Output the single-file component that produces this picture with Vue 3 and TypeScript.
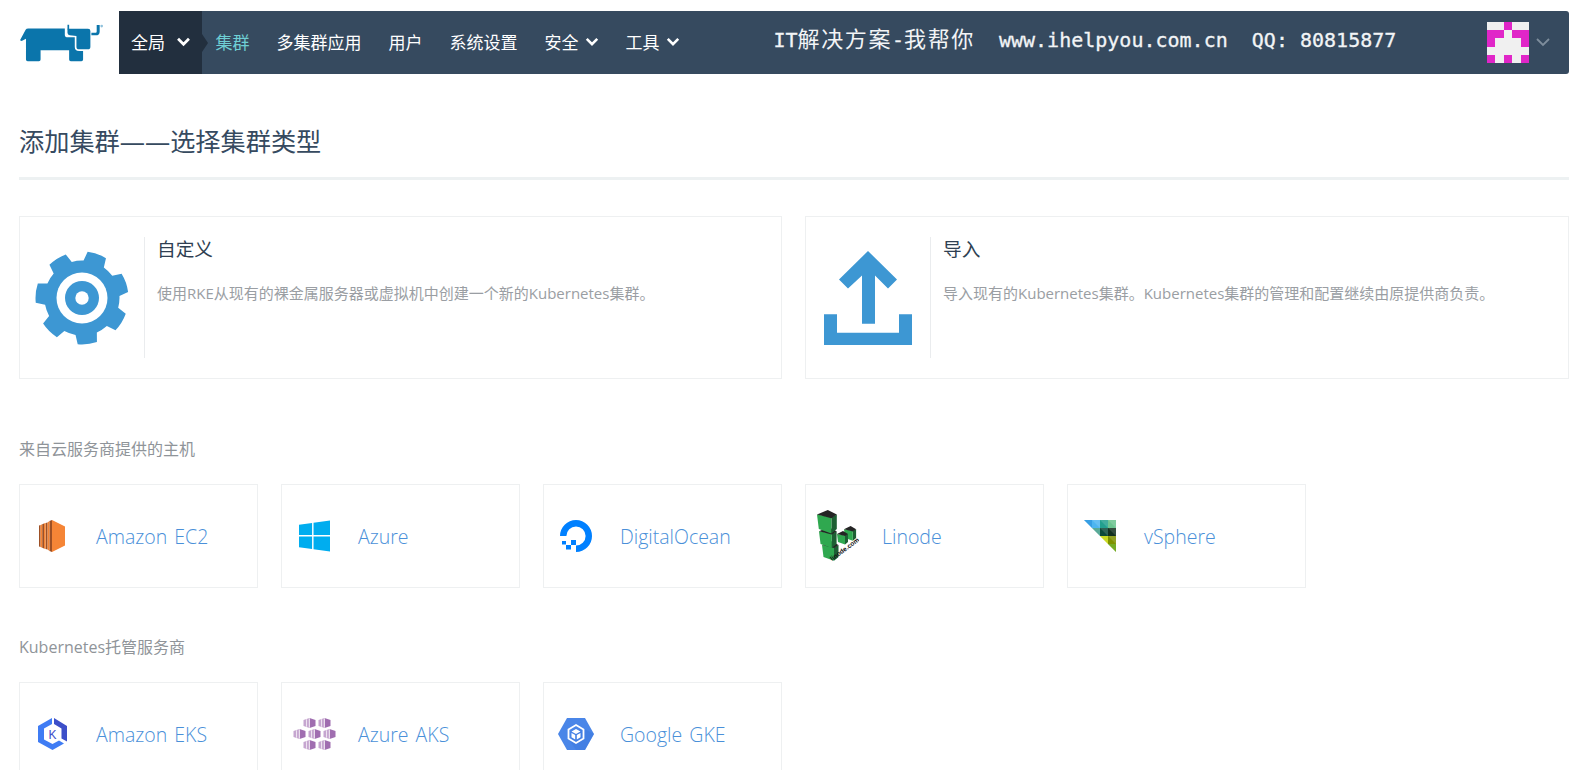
<script setup lang="ts">
const navItems = [
  { label: '集群', active: true },
  { label: '多集群应用' },
  { label: '用户' },
  { label: '系统设置' },
  { label: '安全', menu: true },
  { label: '工具', menu: true },
]

// 模板里连续空格会被压缩,所以放在这里
const bannerParts = [
  { text: 'IT' },
  { text: '解决方案', cjk: true },
  { text: '-' },
  { text: '我帮你', cjk: true },
  { text: '  www.ihelpyou.com.cn  QQ: 80815877' },
]

// 头像图案 1 = 品红
const avatar = [
  0, 0, 1, 0, 0,
  1, 1, 0, 1, 1,
  1, 0, 0, 0, 1,
  0, 0, 0, 0, 0,
  1, 0, 1, 0, 1,
]

const cloudHosts = [
  { id: 'ec2', name: 'Amazon EC2' },
  { id: 'azure', name: 'Azure' },
  { id: 'do', name: 'DigitalOcean' },
  { id: 'linode', name: 'Linode' },
  { id: 'vsphere', name: 'vSphere' },
]

const hosted = [
  { id: 'eks', name: 'Amazon EKS' },
  { id: 'aks', name: 'Azure AKS' },
  { id: 'gke', name: 'Google GKE' },
]

// 齿轮外形,7 个齿
function gearPath(): string {
  const teeth = 7
  const tipR = 46.5
  const rootR = 37.5
  const step = (Math.PI * 2) / teeth
  const pt = (r: number, a: number) =>
    `${(Math.sin(a) * r + 48).toFixed(2)} ${(48 - Math.cos(a) * r).toFixed(2)}`
  let d = ''
  for (let i = 0; i < teeth; i++) {
    const c = ((19 * Math.PI) / 180) + i * step
    const baseHalf = 0.29
    const tipHalf = 0.21
    d += `${i === 0 ? 'M' : 'L'}${pt(rootR, c - baseHalf)} L${pt(tipR, c - tipHalf)} `
    d += `A${tipR} ${tipR} 0 0 1 ${pt(tipR, c + tipHalf)} L${pt(rootR, c + baseHalf)} `
    d += `A${rootR} ${rootR} 0 0 1 ${pt(rootR, c + step - baseHalf)} `
  }
  return d + 'Z'
}

const gear = gearPath()

const linodeCubes = [
  { x: 27, y: 17, s: 11 },
  { x: 20, y: 22, s: 10 },
  { x: 5, y: 32, s: 15 },
  { x: 2, y: 18, s: 16 },
  { x: 0, y: 1, s: 18 },
]

const vsphereTiles = [
  { x: 0, y: 0, c: '#1790e0' }, { x: 8, y: 0, c: '#4db5f0' }, { x: 16, y: 0, c: '#22a08e' }, { x: 24, y: 0, c: '#6cc490' },
  { x: 8, y: 8, c: '#3e9c88' }, { x: 16, y: 8, c: '#0d4a3a' }, { x: 24, y: 8, c: '#12301f' },
  { x: 16, y: 16, c: '#c2d400' }, { x: 24, y: 16, c: '#7f9200' },
  { x: 24, y: 24, c: '#5f9e00' },
]

const aksHexes = [
  [10, 0], [25, 0],
  [0, 11], [15, 11], [30, 11],
  [10, 22], [25, 22],
]
</script>

<template>
  <div class="page">
    <header class="top">
      <div class="logo-box">
        <svg class="logo" viewBox="60 56 250 114" width="83" height="38">
          <path fill="#0b75ab" d="M60 105 L77 73 Q79 69 85 69 L195 69 L195 88 Q195 96 204 96 L225 96 L225 125 Q225 137 238 137 L250 137 L250 163 Q250 168 245 168 L213 168 Q208 168 208 163 L208 135 L122 135 L122 163 Q122 168 117 168 L83 168 Q78 168 78 163 L78 100 L65 107 Z" />
          <path fill="#0b75ab" d="M203 70 L265 70 Q272 70 272 77 L272 124 Q272 132 264 132 L238 132 Q230 132 230 124 L230 92 L210 90 Q203 89 203 82 Z" />
          <path fill="#0b75ab" d="M203 58 L208 58 L208 72 L203 72 Z M275 82 L288 82 Q291 82 291 78 L291 59 L300 59 L300 78 Q300 90 288 90 L275 90 Z" />
          <circle cx="306" cy="62" r="4" fill="#8fc1dc" />
        </svg>
      </div>
      <div class="bar">
        <div class="scope">
          <span>全局</span>
          <svg class="chev scope-chev" viewBox="0 0 16 11"><path d="M2 2 L8 8 L14 2" /></svg>
          <i class="scope-tip"></i>
        </div>
        <nav class="nav">
          <a v-for="item in navItems" :key="item.label" class="nav-link" :class="{ active: item.active }">
            {{ item.label }}
            <svg v-if="item.menu" class="chev" viewBox="0 0 16 11"><path d="M2 2 L8 8 L14 2" /></svg>
          </a>
        </nav>
        <div class="banner"><span v-for="part in bannerParts" :key="part.text" :class="{ cjk: part.cjk }">{{ part.text }}</span></div>
        <div class="user">
          <div class="avatar">
            <i v-for="(c, i) in avatar" :key="i" :class="{ on: c }"></i>
          </div>
          <svg class="user-chev" viewBox="0 0 14 9"><path d="M1 1 L7 7 L13 1" /></svg>
        </div>
      </div>
    </header>

    <h1 class="title">添加集群——选择集群类型</h1>

    <section class="big-row">
      <div class="big-card">
        <div class="big-icon">
          <svg viewBox="0 0 96 96" width="96" height="96">
            <path :d="gear" fill="#3d97d3" />
            <circle cx="48" cy="48" r="25.5" fill="#fff" />
            <circle cx="48" cy="48" r="17" fill="#3d97d3" />
            <circle cx="48" cy="48" r="6.7" fill="#fff" />
          </svg>
        </div>
        <div class="big-body">
          <h3>自定义</h3>
          <p>使用RKE从现有的裸金属服务器或虚拟机中创建一个新的Kubernetes集群。</p>
        </div>
      </div>
      <div class="big-card">
        <div class="big-icon">
          <svg class="upload" viewBox="0 0 88 94" width="88" height="94">
            <path fill="#3d97d3" d="M44 0 L73 28.5 L64 37.5 L51 24.5 L51 72.7 L38 72.7 L38 24.5 L24 37.5 L15 28.5 Z" />
            <path fill="#3d97d3" d="M0 63.3 L13 63.3 L13 81.7 L75 81.7 L75 63.3 L88 63.3 L88 94 L0 94 Z" />
          </svg>
        </div>
        <div class="big-body">
          <h3>导入</h3>
          <p>导入现有的Kubernetes集群。Kubernetes集群的管理和配置继续由原提供商负责。</p>
        </div>
      </div>
    </section>

    <h4 class="group">来自云服务商提供的主机</h4>
    <section class="grid">
      <div v-for="p in cloudHosts" :key="p.id" class="tile">
        <div class="tile-icon">
          <svg v-if="p.id === 'ec2'" viewBox="0 0 26 32" width="26" height="32">
            <path fill="#f58536" d="M13 0 L26 6.5 L26 25.5 L13 32 Z" />
            <path fill="#9d5025" d="M0 5.5 L1.6 5 L1.6 27 L0 26.5 Z M3.2 4.2 L5 3.6 L5 28.4 L3.2 27.8 Z M6.6 3 L8.6 2.4 L8.6 29.6 L6.6 29 Z M10.4 1 L13 0 L13 32 L10.4 31 Z" />
            <path fill="#f58536" d="M1.6 5 L3.2 4.2 L3.2 27.8 L1.6 27 Z M5 3.6 L6.6 3 L6.6 29 L5 28.4 Z M8.6 2.4 L10.4 1 L10.4 31 L8.6 29.6 Z" />
          </svg>
          <svg v-else-if="p.id === 'azure'" viewBox="0 0 32 32" width="31" height="32">
            <path fill="#00adef" d="M0 4.5 L13.5 2.6 L13.5 15 L0 15 Z M15 2.4 L32 0 L32 15 L15 15 Z M0 16.5 L13.5 16.5 L13.5 29.4 L0 27.5 Z M15 16.5 L32 16.5 L32 32 L15 29.6 Z" />
          </svg>
          <svg v-else-if="p.id === 'do'" viewBox="0 0 32 32" width="32" height="32">
            <path fill="none" stroke="#0080ff" stroke-width="6.4" d="M3.2 16 A12.8 12.8 0 1 1 16 28.8" />
            <path fill="#0080ff" d="M11 20 H16 V25 H11 Z M6 25 H11 V29.5 H6 Z M2 21 H6 V24.5 H2 Z" />
          </svg>
          <svg v-else-if="p.id === 'linode'" viewBox="0 0 42 52" width="42" height="52">
            <g v-for="(c, i) in linodeCubes" :key="i">
              <path fill="#1d5f33" :d="`M${c.x + c.s * 0.8} ${c.y + c.s * 0.35} L${c.x + c.s * 1.1} ${c.y + c.s * 0.2} L${c.x + c.s * 1.1} ${c.y + c.s} L${c.x + c.s * 0.8} ${c.y + c.s * 1.25} Z`" />
              <path fill="#2fa84f" :d="`M${c.x} ${c.y + c.s * 0.2} L${c.x + c.s * 0.8} ${c.y + c.s * 0.35} L${c.x + c.s * 0.8} ${c.y + c.s * 1.25} L${c.x + c.s * 0.1} ${c.y + c.s} Z`" />
              <path fill="#242424" :d="`M${c.x} ${c.y + c.s * 0.2} L${c.x + c.s * 0.6} ${c.y - 1} L${c.x + c.s * 1.1} ${c.y + c.s * 0.2} L${c.x + c.s * 0.8} ${c.y + c.s * 0.4} Z`" />
            </g>
            <text class="linode-text" x="0" y="0" transform="translate(15 51) rotate(-36)">linode.com</text>
          </svg>
          <svg v-else viewBox="0 0 32 32" width="32" height="32">
            <defs><clipPath id="vs-clip"><path d="M0 0 L32 0 L32 32 Z" /></clipPath></defs>
            <g clip-path="url(#vs-clip)">
              <g v-for="(t, i) in vsphereTiles" :key="i">
                <rect :x="t.x" :y="t.y" width="8" height="8" :fill="t.c" />
                <path :d="`M${t.x} ${t.y} L${t.x + 8} ${t.y} L${t.x + 8} ${t.y + 8} Z`" fill="#fff" opacity="0.14" />
              </g>
            </g>
          </svg>
        </div>
        <span class="tile-name">{{ p.name }}</span>
      </div>
    </section>

    <h4 class="group second">Kubernetes托管服务商</h4>
    <section class="grid">
      <div v-for="p in hosted" :key="p.id" class="tile">
        <div class="tile-icon">
          <svg v-if="p.id === 'eks'" viewBox="0 0 29 32" width="29" height="32">
            <path fill="#3f7cf4" d="M14 0 L14 6 L6 10.5 L6 21.5 L14.5 26 L21 22.5 L26 25.5 L14.5 32 L0 24 L0 8 Z" />
            <path fill="#3d4fc9" d="M16 0 L29 8 L29 23.5 L23.5 20.5 L23.5 10.5 L16 6 Z" />
            <text class="eks-k" x="14.5" y="20.5">K</text>
          </svg>
          <svg v-else-if="p.id === 'aks'" viewBox="0 0 43 32" width="43" height="32">
            <g v-for="(h, i) in aksHexes" :key="i" :transform="`translate(${h[0]} ${h[1]})`">
              <path fill="#a06eb0" d="M6.5 0 L12.5 2 L12.5 8 L6.5 10 Z" />
              <path fill="#c6a6d0" d="M6.5 0 L0.5 2 L0.5 8 L6.5 10 Z" />
              <path fill="#fff" d="M3.2 1.2 H3.9 V8.8 H3.2 Z M5.9 0.4 H6.6 V9.6 H5.9 Z" />
            </g>
          </svg>
          <svg v-else viewBox="0 0 36 32" width="36" height="32">
            <path fill="#4a86e8" d="M9 0 L27 0 L36 16 L27 32 L9 32 L0 16 Z" />
            <path fill="#3b78de" d="M23 9 L36 16 L27 32 L18 32 L12 23 Z" opacity="0.45" />
            <path fill="none" stroke="#fff" stroke-width="1.8" d="M18 7 L25.5 11.5 L25.5 20.5 L18 25 L10.5 20.5 L10.5 11.5 Z" />
            <path fill="#fff" d="M18 11 L22.5 13.5 L18 16 L13.5 13.5 Z M13.5 15 L17.2 17 L17.2 21.5 L13.5 19.3 Z M22.5 15 L18.8 17 L18.8 21.5 L22.5 19.3 Z" />
          </svg>
        </div>
        <span class="tile-name">{{ p.name }}</span>
      </div>
    </section>
  </div>
</template>

<style>
html, body {
  overflow: hidden;
  background: #fff;
}
</style>

<style scoped>
.page {
  padding: 11px 5px 0 19px;
  font-family: "Open Sans", "Noto Sans CJK SC", sans-serif;
  color: #2f3f52;
}

.top {
  display: flex;
  height: 63px;
}

.logo-box {
  width: 100px;
  margin-top: 13px;
}

.logo {
  display: block;
  margin-left: 1px;
}

.bar {
  flex: 1;
  display: flex;
  align-items: center;
  background: #364a5f;
  border-radius: 0 3px 3px 0;
  color: #fff;
}

.scope {
  position: relative;
  display: flex;
  align-items: center;
  flex: none;
  width: 83px;
  height: 100%;
  padding: 0 0 2px 12px;
  box-sizing: border-box;
  background: #222f3e;
  font-size: 17px;
}

.scope-tip {
  position: absolute;
  left: 100%;
  top: 23px;
  border-left: 6px solid #222f3e;
  border-top: 9px solid transparent;
  border-bottom: 9px solid transparent;
}

.chev {
  width: 14px;
  height: 10px;
  margin-left: 6px;
  fill: none;
  stroke: #fff;
  stroke-width: 3;
}

.chev.scope-chev {
  flex: none;
  width: 15px;
  margin-left: 11px;
}

.nav {
  display: flex;
  align-items: center;
  flex: none;
  margin-left: 13.5px;
  padding-bottom: 2px;
  gap: 27px;
  font-size: 17px;
}

.nav-link {
  display: flex;
  align-items: center;
  white-space: nowrap;
}

.nav-link.active {
  color: #6fcfd4;
}

.banner {
  flex: none;
  margin: 0 0 5px 94px;
  white-space: pre;
  font-family: "DejaVu Sans Mono", "Noto Sans CJK SC", monospace;
  font-size: 20px;
  line-height: 24px;
  color: #f2f4f6;
  -webkit-text-stroke: 0.3px #f2f4f6;
}

.banner .cjk {
  font-size: 22px;
  letter-spacing: 1.6px;
  -webkit-text-stroke: 0;
}

.user {
  display: flex;
  align-items: center;
  margin-left: auto;
  padding-right: 19px;
}

.avatar {
  display: grid;
  grid-template-columns: repeat(5, 8.4px);
  grid-auto-rows: 8.4px;
  background: #f0f0f0;
}

.avatar i.on {
  background: #e026c8;
}

.user-chev {
  width: 14px;
  height: 9px;
  margin-left: 7px;
  fill: none;
  stroke: #7e8d9c;
  stroke-width: 1.8;
}

.title {
  margin: 0;
  padding: 49px 0 18px;
  border-bottom: 3px solid #edf1f2;
  font-size: 25.2px;
  font-weight: 400;
  line-height: 36px;
  color: #364a5f;
}

.big-row {
  display: grid;
  grid-template-columns: 763px 1fr;
  gap: 23px;
  margin-top: 36px;
}

.big-card {
  display: flex;
  height: 163px;
  padding: 20px 0;
  box-sizing: border-box;
  border: 1px solid #eef0f1;
}

.big-icon {
  display: flex;
  align-items: center;
  justify-content: center;
  width: 124px;
  flex: none;
  border-right: 1px solid #eaecee;
}

.upload {
  margin-top: 1px;
}

.big-body {
  padding-left: 12px;
}

.big-body h3 {
  margin: 0;
  font-size: 18.7px;
  font-weight: 400;
  line-height: 24px;
  color: #2f3f52;
}

.big-body p {
  margin: 20px 0 0;
  font-size: 15px;
  line-height: 24px;
  color: #9a9ea3;
}

.group {
  margin: 59px 0 0;
  font-size: 16px;
  font-weight: 400;
  line-height: 22px;
  color: #8f9499;
}

.group.second {
  margin-top: 48px;
}

.grid {
  display: grid;
  grid-template-columns: repeat(6, 239px);
  gap: 23px;
  margin-top: 24px;
}

.tile {
  display: flex;
  align-items: center;
  height: 104px;
  box-sizing: border-box;
  border: 1px solid #eef0f1;
}

.tile-icon {
  display: flex;
  align-items: center;
  justify-content: center;
  width: 64px;
  flex: none;
  margin-right: 12px;
}

.tile-name {
  font-size: 19.5px;
  font-weight: 300;
  word-spacing: 2px;
  color: #4a90d9;
  white-space: nowrap;
}

.linode-text {
  font-family: "Liberation Sans", sans-serif;
  font-size: 6.5px;
  font-weight: 700;
  fill: #111;
}

.eks-k {
  font-family: "Liberation Sans", sans-serif;
  font-size: 12px;
  fill: #3d4fc9;
  text-anchor: middle;
}
</style>
